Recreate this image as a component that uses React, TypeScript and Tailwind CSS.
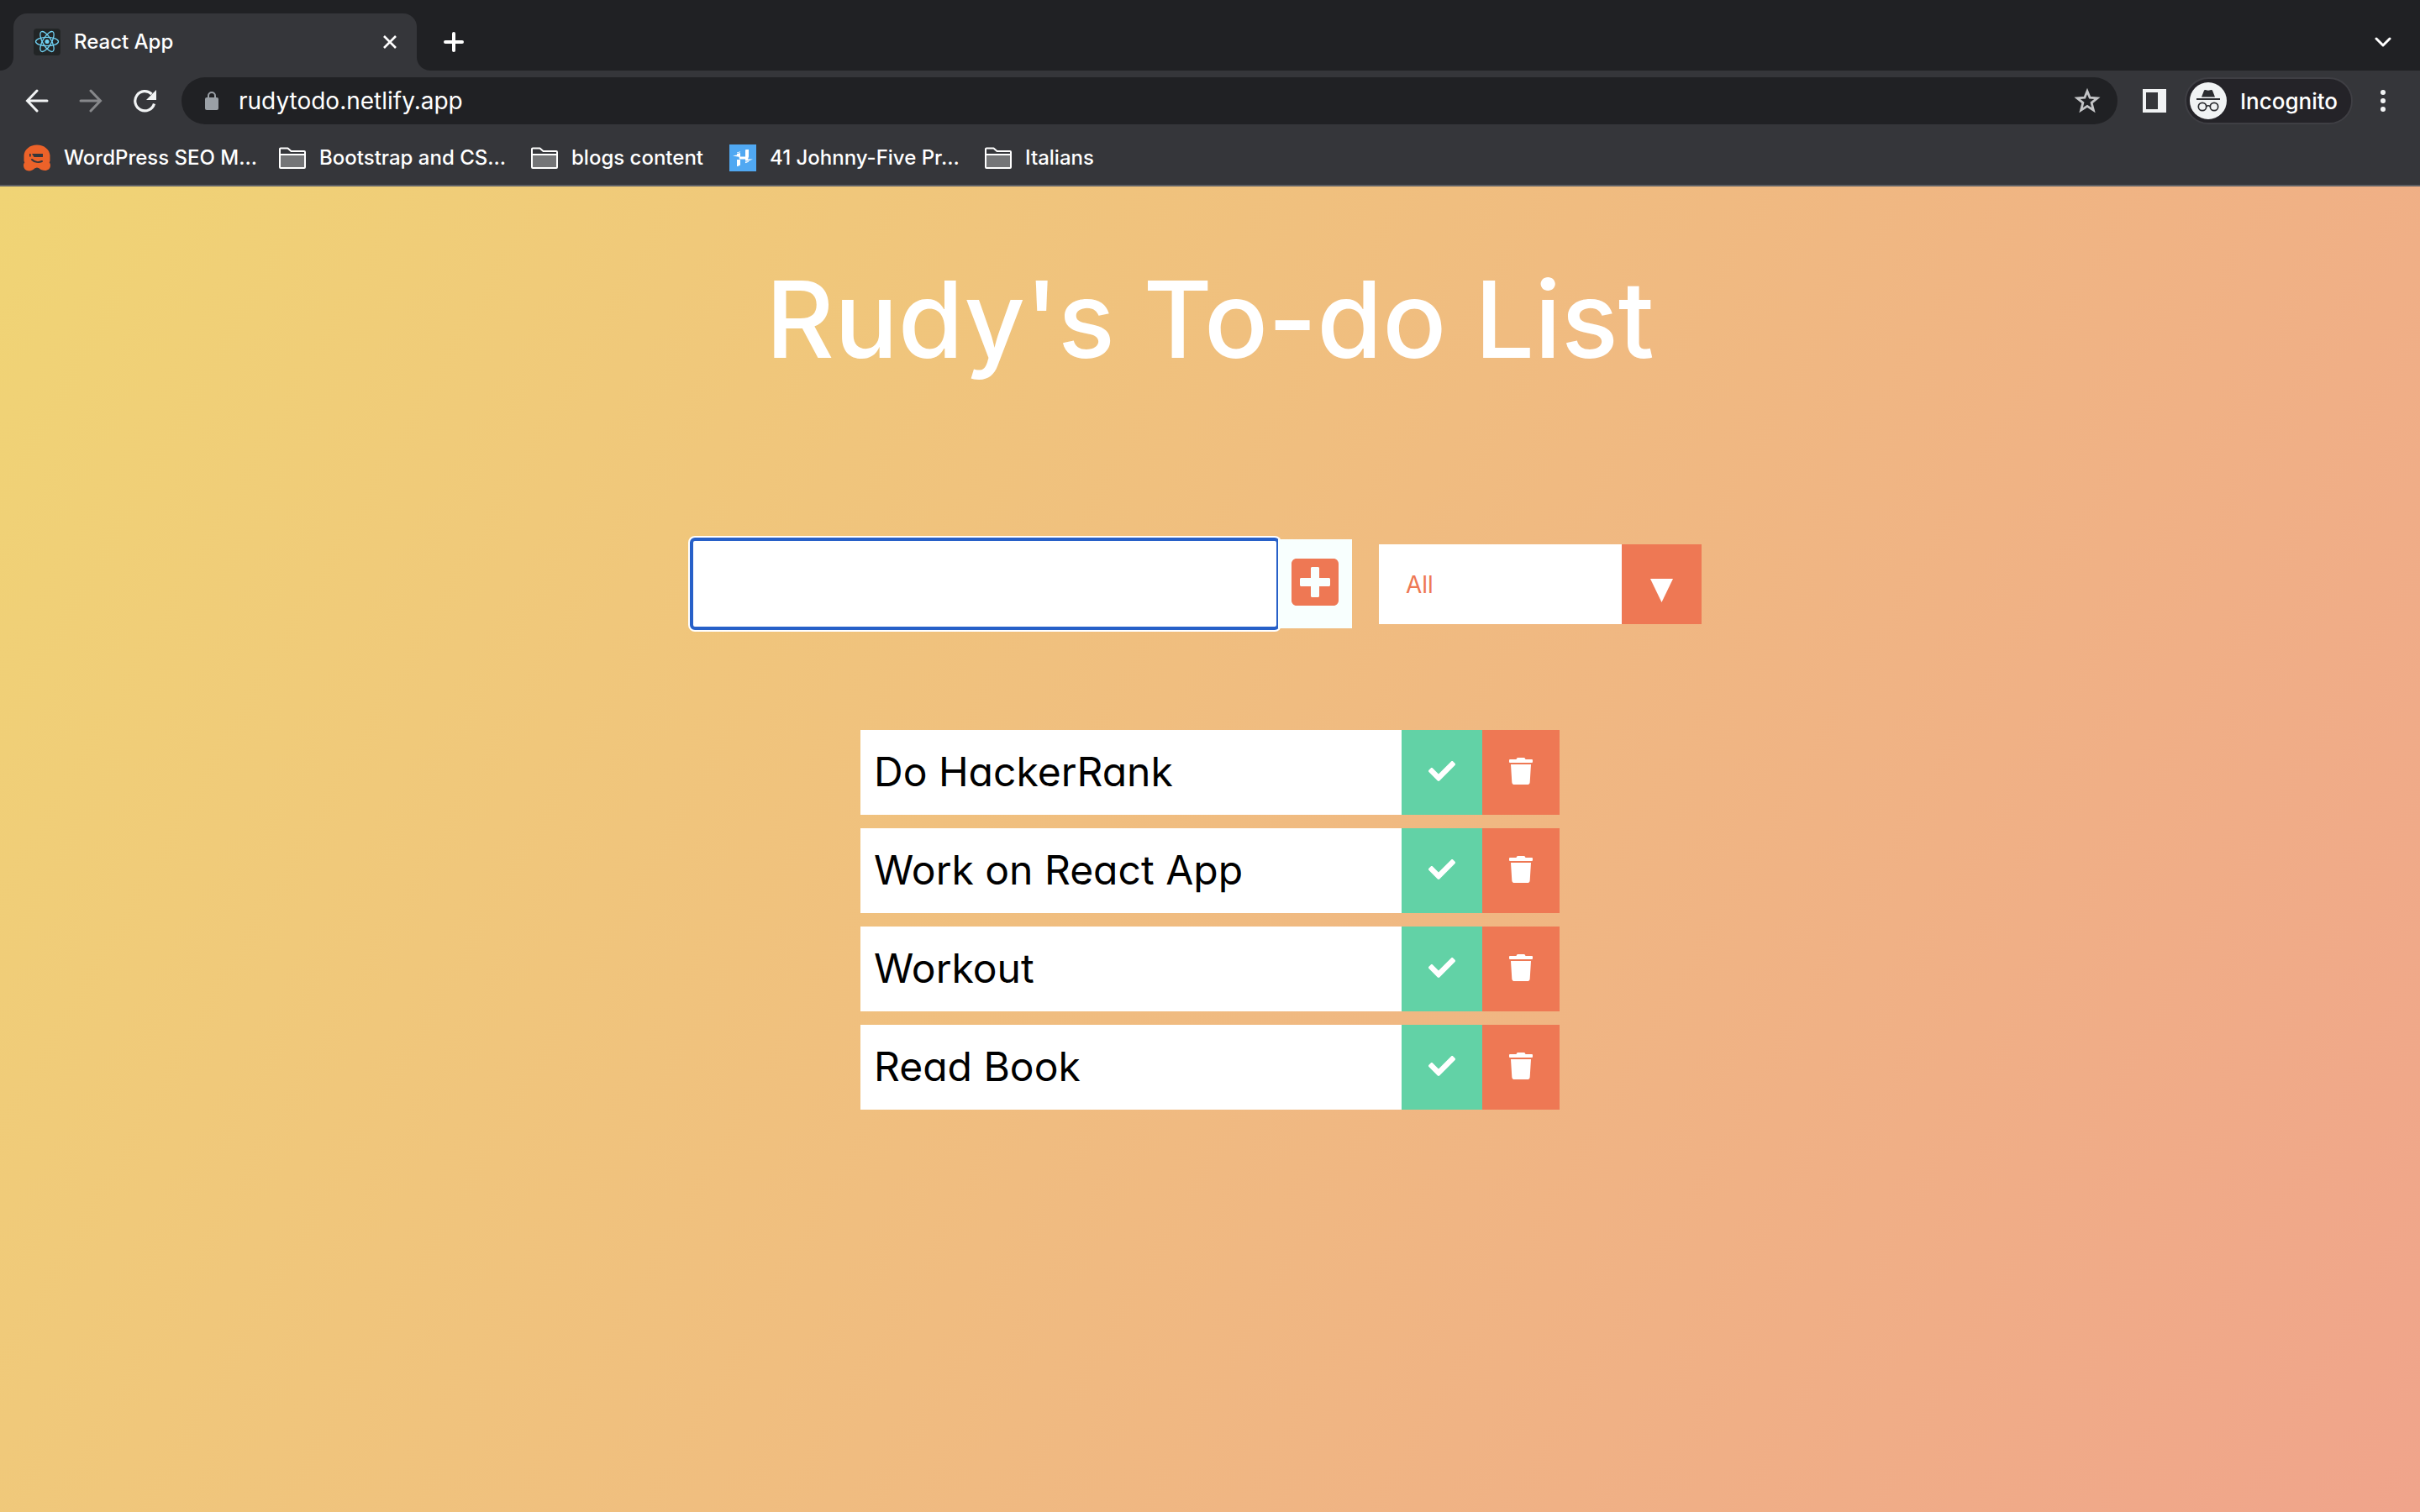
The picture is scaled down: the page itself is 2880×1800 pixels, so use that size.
import React from 'react';
import { FaCheck, FaPlusSquare, FaTrash } from 'react-icons/fa';

const todos = ['Do HackerRank', 'Work on React App', 'Workout', 'Read Book'];

function ReactIcon() {
  return (
    <svg viewBox="0 0 32 32" className="size-8" aria-hidden="true">
      <rect width="32" height="32" rx="4" fill="#222526" />
      <g fill="none" stroke="#70d2f4" strokeWidth="1.3">
        <ellipse cx="16" cy="15.5" rx="13.5" ry="5.2" />
        <ellipse cx="16" cy="15.5" rx="13.5" ry="5.2" transform="rotate(60 16 15.5)" />
        <ellipse cx="16" cy="15.5" rx="13.5" ry="5.2" transform="rotate(120 16 15.5)" />
      </g>
      <circle cx="16" cy="15.5" r="2.5" fill="#70d2f4" />
    </svg>
  );
}

function BuddyIcon() {
  return (
    <svg viewBox="0 0 32 32" className="size-8 shrink-0" aria-hidden="true">
      <path
        fill="#ec6229"
        d="M16 .5C24.500.5 31 6 31.500 13v6c0 1-.3 1.500-.8 2.200.9 1.200 1.300 2.300 1.300 3.800 0 3.700-3 6-6.500 6-2.800 0-5.300-1-7-2.700L16 27.500l-2.500.8C11.800 30 9.300 31.500 6.500 31.500 3 31.500 0 28.700 0 25c0-1.500.4-2.600 1.300-3.800C.8 20.500.5 20 .5 19v-6C1 6 7.500.5 16 .5Z"
      />
      <path fill="#35363a" d="M7 11h1.700v3.500H7zM10 11h13v4H12.500z" />
      <path fill="none" stroke="#35363a" strokeWidth="2" strokeLinecap="round" d="M10 18c3 3.200 8 3.700 12 2" />
    </svg>
  );
}

function HacksterIcon() {
  return (
    <svg viewBox="0 0 32 32" className="size-8 shrink-0" aria-hidden="true">
      <rect width="32" height="32" fill="#50a8f2" />
      <g fill="#fff">
        <path d="M4 13.500 9 12.500V11l4-1v4.500h6V7q0-1 1-1h3v8.500l-1 3h6L23 19.500h-4v-2h-7L11.500 14.800z" />
        <path d="M9 18h4v6.500L10 26H9zM19 20.500l4-.5v.8l-4 1.500z" />
        <path d="m9 9.500 4-1.200v1L9 10.200z" />
      </g>
    </svg>
  );
}

function FolderIcon() {
  return (
    <svg viewBox="0 0 32 28" className="h-7 w-8 shrink-0" aria-hidden="true">
      <path fill="#747577" d="M2 10h28v15H2z" />
      <path
        fill="none"
        stroke="#fff"
        strokeWidth="2"
        strokeLinejoin="round"
        d="M1 3.500a1 1 0 0 1 1-1h8.500l4 3.500H30a1 1 0 0 1 1 1v18a1 1 0 0 1-1 1H2a1 1 0 0 1-1-1zM1 10h30"
      />
    </svg>
  );
}

function IncognitoIcon() {
  return (
    <svg viewBox="0 0 44 44" className="size-11" aria-hidden="true">
      <circle cx="22" cy="22" r="22" fill="#f1f3f4" />
      <path
        fill="#2b2c30"
        d="M14 17.500 17 9.800q.4-1 1.500-.8l3.500.8 3.500-.8q1.100-.2 1.500.8l3 7.700zM8 19h28v2H8z"
      />
      <g fill="none" stroke="#2b2c30" strokeWidth="1.700">
        <circle cx="15" cy="29" r="4.700" />
        <circle cx="29" cy="29" r="4.700" />
        <path d="M19.700 28.500q2.300-1.500 4.600 0" />
      </g>
    </svg>
  );
}

function Bookmark({ icon, label, width }: { icon: React.ReactNode; label: string; width: string }) {
  return (
    <a href="#" className={`flex items-center gap-4 whitespace-nowrap ${width}`}>
      {icon}
      <span>{label}</span>
    </a>
  );
}

function Browser() {
  return (
    <header className="border-b-2 border-[#5f6064] bg-[#35363a] text-white">
      <div className="flex h-[84px] items-end bg-[#202124]">
        <div className="flex h-full w-4 flex-col justify-end bg-[#35363a]">
          <div className="h-full rounded-br-2xl bg-[#202124]" />
        </div>
        <div className="flex h-[68px] w-[480px] items-center rounded-t-2xl bg-[#35363a] pr-6 pl-6">
          <ReactIcon />
          <span className="ml-4 flex-1 text-2xl font-medium">React App</span>
          <button type="button" aria-label="Close tab">
            <svg viewBox="0 0 16 16" className="size-4" fill="none" stroke="#fff" strokeWidth="2.600" aria-hidden="true">
              <path d="m1 1 14 14M15 1 1 15" />
            </svg>
          </button>
        </div>
        <div className="flex h-full w-4 flex-col justify-end bg-[#35363a]">
          <div className="h-full rounded-bl-2xl bg-[#202124]" />
        </div>
        <div className="flex h-[68px] flex-1 items-center justify-between pr-[34px] pl-4">
          <button type="button" aria-label="New tab">
            <svg viewBox="0 0 24 24" className="size-6" fill="none" stroke="#fff" strokeWidth="4" strokeLinecap="round" aria-hidden="true">
              <path d="M12 2v20M2 12h20" />
            </svg>
          </button>
          <button type="button" aria-label="Search tabs">
            <svg viewBox="0 0 20 12" className="h-3 w-5" fill="none" stroke="#fff" strokeWidth="3" strokeLinecap="round" strokeLinejoin="round" aria-hidden="true">
              <path d="m2 2 8 8 8-8" />
            </svg>
          </button>
        </div>
      </div>

      <div className="flex h-[72px] items-center pr-10 pl-[30px]">
        <div className="flex w-[186px] items-center gap-9">
          <button type="button" aria-label="Back">
            <svg viewBox="0 0 28 28" className="size-7" fill="none" stroke="#f1f3f4" strokeWidth="3" strokeLinecap="round" aria-hidden="true">
              <path d="M26 14H3M14 2 2.500 14 14 26" />
            </svg>
          </button>
          <button type="button" aria-label="Forward">
            <svg viewBox="0 0 28 28" className="size-7" fill="none" stroke="#87888b" strokeWidth="3" strokeLinecap="round" aria-hidden="true">
              <path d="M2 14h23M14 2l11.500 12L14 26" />
            </svg>
          </button>
          <button type="button" aria-label="Reload">
            <svg viewBox="0 0 28 28" className="size-7" aria-hidden="true">
              <path fill="none" stroke="#f1f3f4" strokeWidth="3.200" d="M25.500 17.500A11.600 11.600 0 1 1 22.500 6" />
              <path fill="#f1f3f4" d="M28 1v12H16z" />
            </svg>
          </button>
        </div>
        <div className="flex h-14 flex-1 items-center rounded-full bg-[#202124] pr-5 pl-7">
          <svg viewBox="0 0 16 22" className="h-[22px] w-4" aria-hidden="true">
            <rect y="7" width="16" height="15" rx="2" fill="#9aa0a6" />
            <path fill="none" stroke="#9aa0a6" strokeWidth="2" d="M4 8V5a4 4 0 0 1 8 0v3" />
          </svg>
          <input
            aria-label="Address"
            defaultValue="rudytodo.netlify.app"
            className="ml-6 min-w-0 flex-1 bg-transparent text-[28px] outline-none"
          />
          <button type="button" aria-label="Bookmark this page">
            <svg viewBox="0 0 32 32" className="size-8" fill="none" stroke="#c4c5c7" strokeWidth="2.800" aria-hidden="true">
              <path d="m16 4.500 3.100 7.700 8.800.6-6.800 5.500 2.300 8.900-7.400-4.800-7.400 4.800 2.300-8.900-6.800-5.500 8.800-.6z" />
            </svg>
          </button>
        </div>
        <button type="button" aria-label="Side panel" className="ml-[30px] flex size-7 border-4 border-r-[10px] border-[#f1f3f4]" />
        <button type="button" className="ml-[22px] flex h-14 w-[200px] items-center gap-4 rounded-full border-2 border-[#3f3f44] bg-[#242328] pl-1 text-[26px] font-medium">
          <IncognitoIcon />
          Incognito
        </button>
        <button type="button" aria-label="Menu" className="ml-8">
          <svg viewBox="0 0 8 28" className="h-7 w-2" fill="#f1f3f4" aria-hidden="true">
            <circle cx="4" cy="4" r="3" />
            <circle cx="4" cy="14" r="3" />
            <circle cx="4" cy="24" r="3" />
          </svg>
        </button>
      </div>

      <nav className="flex h-16 items-center pl-7 text-2xl font-medium" aria-label="Bookmarks">
        <Bookmark icon={<BuddyIcon />} label="WordPress SEO M..." width="w-[304px]" />
        <Bookmark icon={<FolderIcon />} label="Bootstrap and CS..." width="w-[300px]" />
        <Bookmark icon={<FolderIcon />} label="blogs content" width="w-[236px]" />
        <Bookmark icon={<HacksterIcon />} label="41 Johnny-Five Pr..." width="w-[304px]" />
        <Bookmark icon={<FolderIcon />} label="Italians" width="" />
      </nav>
    </header>
  );
}

export default function App() {
  return (
    <div className="flex min-h-screen flex-col font-['Inter',sans-serif]">
      <Browser />
      <main className="flex-1 bg-[linear-gradient(120deg,#f0d475,#f0a48b)] [font-feature-settings:'cv11']">
        <h1 className="pt-16 text-center text-[126px] leading-[188px] font-medium text-white">
          Rudy's To-do List
        </h1>
        <form className="mt-[168px] flex items-center justify-center" onSubmit={(e) => e.preventDefault()}>
          <input
            aria-label="New to-do"
            className="h-[106px] w-[698px] rounded-sm bg-white px-4 text-5xl text-black shadow-[0_0_0_4px_#fff] outline-4 -outline-offset-2 outline-[#2760c8]"
          />
          <button
            type="submit"
            aria-label="Add"
            className="relative flex h-[106px] w-[88px] items-center justify-center bg-[#f8fffe] pb-1 text-[64px] text-[#ee7854]"
          >
            <FaPlusSquare />
          </button>
          <div className="relative mx-8">
            <select
              aria-label="Filter"
              className="block h-[95px] w-96 appearance-none rounded-none bg-white px-8 pt-0.5 text-[28px] text-[#ee7854]"
            >
              <option>All</option>
              <option>Completed</option>
              <option>Uncompleted</option>
            </select>
            <div className="pointer-events-none absolute inset-y-0 right-0 flex w-[95px] items-center justify-center bg-[#ee7854] pt-4">
              <svg viewBox="0 0 28 28" className="size-7" fill="#fff" aria-hidden="true">
                <path d="M0 0h27L13.500 28z" />
              </svg>
            </div>
          </div>
        </form>
        <ul className="mx-auto mt-[121px] flex w-[832px] flex-col gap-4">
          {todos.map((todo) => (
            <li key={todo} className="flex h-[101px] items-stretch bg-white text-5xl text-black">
              <span className="flex flex-1 items-center px-4 pb-0.5">{todo}</span>
              <button
                type="button"
                aria-label={`Complete ${todo}`}
                className="flex w-24 items-center justify-center bg-[#62d2a6] pb-1 text-[32px] text-white"
              >
                <FaCheck />
              </button>
              <button
                type="button"
                aria-label={`Delete ${todo}`}
                className="flex w-[92px] items-center justify-center bg-[#ee7854] pb-1 text-[32px] text-white"
              >
                <FaTrash />
              </button>
            </li>
          ))}
        </ul>
      </main>
    </div>
  );
}
